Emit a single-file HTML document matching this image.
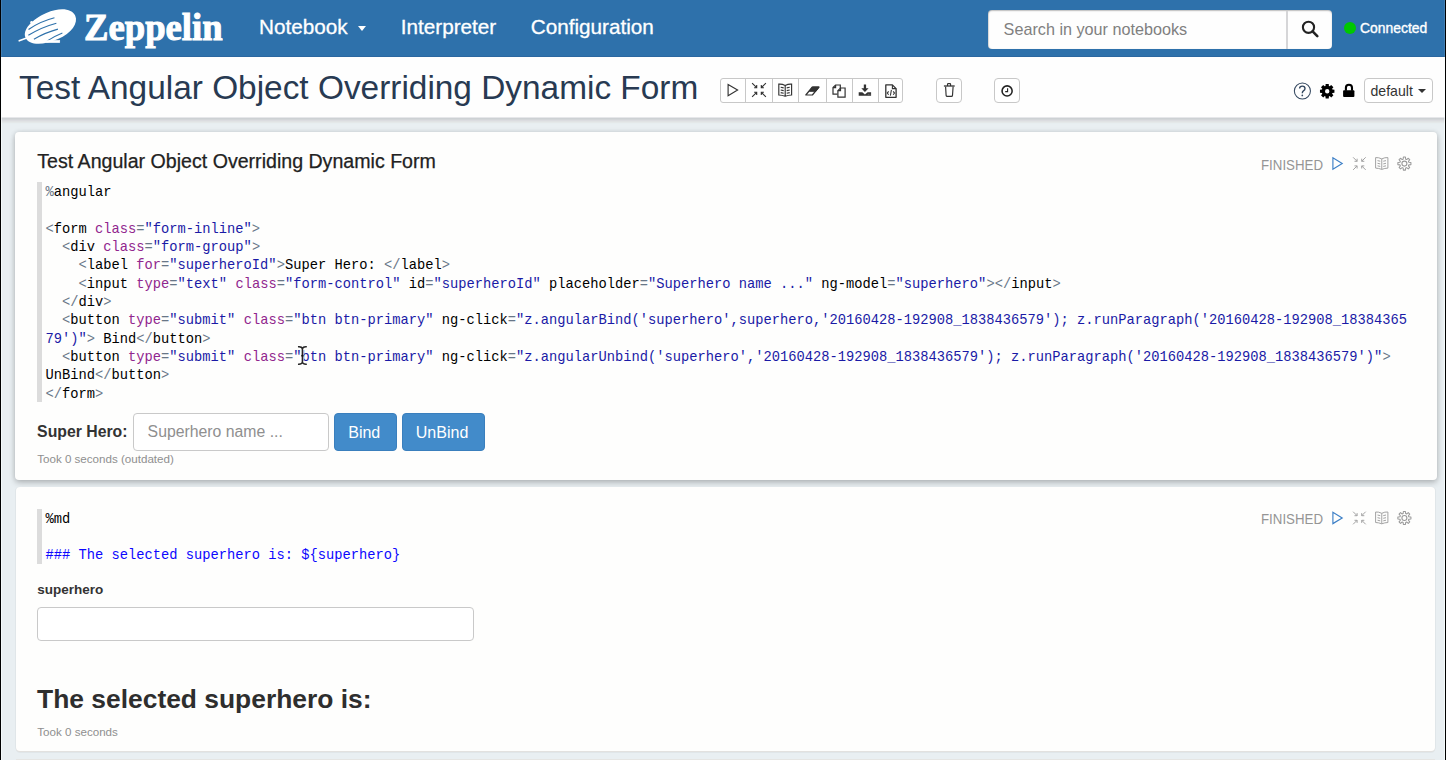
<!DOCTYPE html><html><head><meta charset="utf-8"><style>
html,body{margin:0;padding:0;}
body{width:1446px;height:760px;overflow:hidden;position:relative;background:#e9eff2;}
.t{position:absolute;white-space:pre;}
.b{position:absolute;}
</style></head><body>
<div class="b" style="left:0px;top:0px;width:1446px;height:57px;background:#2e71ab;border-bottom:1px solid #2b67a0;box-sizing:border-box;"></div>
<svg class="b" style="left:0;top:0" width="90" height="57" viewBox="0 0 90 57">
<g transform="translate(50.3,26.8) rotate(-24)">
<path d="M-27,0 C-27,-8.5 -14,-14.3 2,-14.3 C17,-14.3 27.3,-8 27.3,0 C27.3,8 17,14.3 2,14.3 C-14,14.3 -27,8.5 -27,0 Z" fill="#fff"/>
<path d="M-21,-6.4 Q-8,-9.2 7.5,-6.6" stroke="#2e71ab" stroke-width="1.15" fill="none"/>
<path d="M-23.5,-1.2 Q-8,-3.2 7,-0.8" stroke="#2e71ab" stroke-width="1.15" fill="none"/>
<path d="M-20,4.6 Q-7,3.2 6,5.2" stroke="#2e71ab" stroke-width="1.15" fill="none"/>
<path d="M-9,11.6 Q0,10.3 8.5,10.6" stroke="#2e71ab" stroke-width="1" fill="none"/>
</g>
<path d="M19.2,40.8 L26,38.2" stroke="#fff" stroke-width="1.6" stroke-linecap="round"/>
<circle cx="31.6" cy="22.3" r="1.3" fill="#fff"/>
<rect x="46.4" y="40.3" width="13.4" height="2.4" fill="#fff" stroke="#fff" stroke-width="0.5"/>
</svg>
<div class="t" style="left:84.30px;top:7.77px;font-size:38px;line-height:38px;font-family:'Liberation Serif', serif;color:#fff;font-weight:bold;-webkit-text-stroke:1px #fff;transform:scaleX(0.965);transform-origin:0 0;">Zeppelin</div>
<div class="t" style="left:259.00px;top:16.68px;font-size:20.7px;line-height:20.7px;font-family:'Liberation Sans', sans-serif;color:#fff;font-weight:normal;-webkit-text-stroke:0.3px #fff;">Notebook</div>
<div class="b" style="left:358px;top:26px;width:0;height:0;border-left:4.5px solid transparent;border-right:4.5px solid transparent;border-top:5px solid #fff"></div>
<div class="t" style="left:400.80px;top:16.68px;font-size:20.7px;line-height:20.7px;font-family:'Liberation Sans', sans-serif;color:#fff;font-weight:normal;-webkit-text-stroke:0.3px #fff;">Interpreter</div>
<div class="t" style="left:530.80px;top:16.68px;font-size:20.7px;line-height:20.7px;font-family:'Liberation Sans', sans-serif;color:#fff;font-weight:normal;-webkit-text-stroke:0.3px #fff;">Configuration</div>
<div class="b" style="left:988px;top:10px;width:344px;height:38.5px;background:#fefefe;border-radius:4px;box-shadow:inset 0 1px 1.5px rgba(0,0,0,0.25), inset 1px 0 1px rgba(0,0,0,0.12);"></div>
<div class="b" style="left:1286.2px;top:10.5px;width:1.7999999999999545px;height:38.0px;background:#d6d6d8;"></div>
<div class="t" style="left:1003.60px;top:21.09px;font-size:16.2px;line-height:16.2px;font-family:'Liberation Sans', sans-serif;color:#808080;font-weight:normal;">Search in your notebooks</div>
<svg class="b" style="left:1300px;top:19px" width="20" height="20" viewBox="0 0 20 20">
<circle cx="8.5" cy="8.3" r="5.6" stroke="#222" stroke-width="2.1" fill="none"/>
<path d="M12.6 12.4 L17.3 17.1" stroke="#222" stroke-width="2.6" stroke-linecap="round"/></svg>
<div class="b" style="left:1343.8px;top:22.1px;width:12.4px;height:12.4px;border-radius:50%;background:#00c800"></div>
<div class="t" style="left:1360.00px;top:22.03px;font-size:13.9px;line-height:13.9px;font-family:'Liberation Sans', sans-serif;color:#fff;font-weight:normal;-webkit-text-stroke:0.35px #fff;">Connected</div>
<div class="b" style="left:0px;top:57px;width:1446px;height:60px;background:#fefefe;"></div>
<div class="b" style="left:1px;top:117px;width:1444px;height:1px;background:rgb(230,231,234);"></div>
<div class="b" style="left:1px;top:118px;width:1444px;height:1px;background:rgb(205,209,212);"></div>
<div class="b" style="left:1px;top:119px;width:1444px;height:1px;background:rgb(211,214,217);"></div>
<div class="b" style="left:1px;top:120px;width:1444px;height:1px;background:rgb(219,220,224);"></div>
<div class="b" style="left:1px;top:121px;width:1444px;height:1px;background:rgb(224,227,228);"></div>
<div class="b" style="left:1px;top:122px;width:1444px;height:1px;background:rgb(228,232,233);"></div>
<div class="b" style="left:1px;top:123px;width:1444px;height:1px;background:rgb(231,238,240);"></div>
<div class="t" style="left:19.10px;top:70.73px;font-size:33.4px;line-height:33.4px;font-family:'Liberation Sans', sans-serif;color:#283a52;font-weight:normal;">Test Angular Object Overriding Dynamic Form</div>
<div class="b" style="left:15px;top:132px;width:1421.5px;height:348px;background:#fefefd;border-radius:4px;box-shadow:0 0 5px rgba(0,0,0,0.12), 0 3px 6px rgba(0,0,0,0.2);"></div>
<div class="b" style="left:16px;top:487px;width:1419px;height:264px;background:#fefefd;border-radius:4px;box-shadow:0 1px 0 #e2e1df, 0 2px 0 rgba(0,0,0,0.035), -1px 0 0 rgba(0,0,0,0.035), 1px 0 0 rgba(0,0,0,0.035);"></div>
<div class="b" style="left:16px;top:759px;width:1419px;height:1px;background:#e5e5e3;"></div>
<div class="t" style="left:37.30px;top:151.61px;font-size:19.6px;line-height:19.6px;font-family:'Liberation Sans', sans-serif;color:#222;font-weight:normal;-webkit-text-stroke:0.25px #222;">Test Angular Object Overriding Dynamic Form</div>
<div class="t" style="left:1260.80px;top:157.54px;font-size:14.6px;line-height:14.6px;font-family:'Liberation Sans', sans-serif;color:#959595;font-weight:normal;transform:scaleX(0.91);transform-origin:0 0;">FINISHED</div>
<div class="b" style="left:37px;top:182px;width:4.5px;height:220px;background:#dcdcdc;"></div>
<div class="t" style="left:45.5px;top:183.98px;font-size:13.75px;line-height:18.33px;font-family:'Liberation Mono', monospace;"><span style="color:#687687">%</span><span style="color:#000">angular</span>
 
<span style="color:#687687">&lt;</span><span style="color:#000">form</span><span style="color:#000"> </span><span style="color:#91268e">class</span><span style="color:#687687">=</span><span style="color:#1a1aa6">"form-inline"</span><span style="color:#687687">&gt;</span>
<span style="color:#000">  </span><span style="color:#687687">&lt;</span><span style="color:#000">div</span><span style="color:#000"> </span><span style="color:#91268e">class</span><span style="color:#687687">=</span><span style="color:#1a1aa6">"form-group"</span><span style="color:#687687">&gt;</span>
<span style="color:#000">    </span><span style="color:#687687">&lt;</span><span style="color:#000">label</span><span style="color:#000"> </span><span style="color:#91268e">for</span><span style="color:#687687">=</span><span style="color:#1a1aa6">"superheroId"</span><span style="color:#687687">&gt;</span><span style="color:#000">Super Hero: </span><span style="color:#687687">&lt;/</span><span style="color:#000">label</span><span style="color:#687687">&gt;</span>
<span style="color:#000">    </span><span style="color:#687687">&lt;</span><span style="color:#000">input</span><span style="color:#000"> </span><span style="color:#91268e">type</span><span style="color:#687687">=</span><span style="color:#1a1aa6">"text"</span><span style="color:#000"> </span><span style="color:#91268e">class</span><span style="color:#687687">=</span><span style="color:#1a1aa6">"form-control"</span><span style="color:#000"> id</span><span style="color:#687687">=</span><span style="color:#1a1aa6">"superheroId"</span><span style="color:#000"> placeholder</span><span style="color:#687687">=</span><span style="color:#1a1aa6">"Superhero name ..."</span><span style="color:#000"> ng-model</span><span style="color:#687687">=</span><span style="color:#1a1aa6">"superhero"</span><span style="color:#687687">&gt;&lt;/</span><span style="color:#000">input</span><span style="color:#687687">&gt;</span>
<span style="color:#000">  </span><span style="color:#687687">&lt;/</span><span style="color:#000">div</span><span style="color:#687687">&gt;</span>
<span style="color:#000">  </span><span style="color:#687687">&lt;</span><span style="color:#000">button</span><span style="color:#000"> </span><span style="color:#91268e">type</span><span style="color:#687687">=</span><span style="color:#1a1aa6">"submit"</span><span style="color:#000"> </span><span style="color:#91268e">class</span><span style="color:#687687">=</span><span style="color:#1a1aa6">"btn btn-primary"</span><span style="color:#000"> ng-click</span><span style="color:#687687">=</span><span style="color:#1a1aa6">"z.angularBind('superhero',superhero,'20160428-192908_1838436579'); z.runParagraph('20160428-192908_18384365</span>
<span style="color:#1a1aa6">79')"</span><span style="color:#687687">&gt;</span><span style="color:#000"> Bind</span><span style="color:#687687">&lt;/</span><span style="color:#000">button</span><span style="color:#687687">&gt;</span>
<span style="color:#000">  </span><span style="color:#687687">&lt;</span><span style="color:#000">button</span><span style="color:#000"> </span><span style="color:#91268e">type</span><span style="color:#687687">=</span><span style="color:#1a1aa6">"submit"</span><span style="color:#000"> </span><span style="color:#91268e">class</span><span style="color:#687687">=</span><span style="color:#1a1aa6">"btn btn-primary"</span><span style="color:#000"> ng-click</span><span style="color:#687687">=</span><span style="color:#1a1aa6">"z.angularUnbind('superhero','20160428-192908_1838436579'); z.runParagraph('20160428-192908_1838436579')"</span><span style="color:#687687">&gt;</span>
<span style="color:#000">UnBind</span><span style="color:#687687">&lt;/</span><span style="color:#000">button</span><span style="color:#687687">&gt;</span>
<span style="color:#687687">&lt;/</span><span style="color:#000">form</span><span style="color:#687687">&gt;</span></div>
<div class="t" style="left:37.10px;top:423.63px;font-size:15.8px;line-height:15.8px;font-family:'Liberation Sans', sans-serif;color:#333;font-weight:bold;">Super Hero:</div>
<div class="b" style="left:132.5px;top:413px;width:196.5px;height:38.30000000000001px;background:#fff;border:1px solid #c9c9c9;border-radius:4px;box-sizing:border-box;"></div>
<div class="t" style="left:147.60px;top:423.93px;font-size:15.8px;line-height:15.8px;font-family:'Liberation Sans', sans-serif;color:#8f8f8f;font-weight:normal;">Superhero name ...</div>
<div class="b" style="left:334.2px;top:413px;width:62.60000000000002px;height:38.30000000000001px;background:#428bca;border:1px solid #3a7fbd;border-radius:4px;box-sizing:border-box;"></div>
<div class="t" style="left:348.20px;top:424.41px;font-size:16.05px;line-height:16.05px;font-family:'Liberation Sans', sans-serif;color:#fff;font-weight:normal;">Bind</div>
<div class="b" style="left:401.7px;top:413px;width:83.30000000000001px;height:38.30000000000001px;background:#428bca;border:1px solid #3a7fbd;border-radius:4px;box-sizing:border-box;"></div>
<div class="t" style="left:415.80px;top:424.41px;font-size:16.05px;line-height:16.05px;font-family:'Liberation Sans', sans-serif;color:#fff;font-weight:normal;">UnBind</div>
<div class="t" style="left:37.20px;top:452.78px;font-size:11.6px;line-height:11.6px;font-family:'Liberation Sans', sans-serif;color:#8f8f8f;font-weight:normal;">Took 0 seconds (outdated)</div>
<div class="t" style="left:1260.80px;top:511.94px;font-size:14.6px;line-height:14.6px;font-family:'Liberation Sans', sans-serif;color:#959595;font-weight:normal;transform:scaleX(0.91);transform-origin:0 0;">FINISHED</div>
<div class="b" style="left:37px;top:509px;width:4.5px;height:55px;background:#dcdcdc;"></div>
<div class="t" style="left:45.5px;top:510.58px;font-size:13.75px;line-height:18.33px;font-family:'Liberation Mono', monospace;"><span style="color:#000">%md</span>
 
<span style="color:#0c07ff">### The selected superhero is: ${superhero}</span></div>
<div class="t" style="left:37.30px;top:582.57px;font-size:13.5px;line-height:13.5px;font-family:'Liberation Sans', sans-serif;color:#333;font-weight:bold;">superhero</div>
<div class="b" style="left:37px;top:606.8px;width:436.5px;height:33.80000000000007px;background:#fff;border:1px solid #c9c9c9;border-radius:4px;box-sizing:border-box;"></div>
<div class="t" style="left:37.10px;top:686.25px;font-size:26.4px;line-height:26.4px;font-family:'Liberation Sans', sans-serif;color:#2e2e2e;font-weight:bold;">The selected superhero is:</div>
<div class="t" style="left:37.30px;top:726.38px;font-size:11.6px;line-height:11.6px;font-family:'Liberation Sans', sans-serif;color:#8f8f8f;font-weight:normal;">Took 0 seconds</div>
<div class="b" style="left:719.5px;top:78.3px;width:183.29999999999995px;height:24.299999999999997px;border:1px solid #c8c8c8;border-radius:3px;box-sizing:border-box;background:#fff;"></div>
<div class="b" style="left:745.1px;top:78.3px;width:1.0px;height:24.299999999999997px;background:#c8c8c8;"></div>
<div class="b" style="left:771.8px;top:78.3px;width:1.0px;height:24.299999999999997px;background:#c8c8c8;"></div>
<div class="b" style="left:798.1px;top:78.3px;width:1.0px;height:24.299999999999997px;background:#c8c8c8;"></div>
<div class="b" style="left:825.9px;top:78.3px;width:1.0px;height:24.299999999999997px;background:#c8c8c8;"></div>
<div class="b" style="left:852.0px;top:78.3px;width:1.0px;height:24.299999999999997px;background:#c8c8c8;"></div>
<div class="b" style="left:877.8px;top:78.3px;width:1.0px;height:24.299999999999997px;background:#c8c8c8;"></div>
<div class="b" style="left:936.3px;top:78.3px;width:26.100000000000023px;height:24.299999999999997px;border:1px solid #c8c8c8;border-radius:4px;box-sizing:border-box;background:#fff;"></div>
<div class="b" style="left:994.4px;top:78.3px;width:25.600000000000023px;height:24.299999999999997px;border:1px solid #c8c8c8;border-radius:4px;box-sizing:border-box;background:#fff;"></div>
<div class="b" style="left:1363.5px;top:78.3px;width:69.29999999999995px;height:24.5px;border:1px solid #c8c8c8;border-radius:4px;box-sizing:border-box;background:#fff;"></div>
<div class="t" style="left:1370.50px;top:83.56px;font-size:14.1px;line-height:14.1px;font-family:'Liberation Sans', sans-serif;color:#333;font-weight:normal;">default</div>
<div class="b" style="left:1418.3px;top:88.5px;width:0;height:0;border-left:4px solid transparent;border-right:4px solid transparent;border-top:4.6px solid #333"></div>
<svg class="b" style="left:0;top:0;z-index:50" width="1446" height="760" viewBox="0 0 1446 760"><path d="M728.1,84.5 L728.1,95.8 L737.6,90.1 Z" stroke="#333" stroke-width="1.15" fill="none" stroke-linejoin="miter"/><path d="M752.10,83.10 L756.70,87.70 M756.70,85.10 L756.70,87.70 L754.10,87.70 M752.10,96.90 L756.70,92.30 M756.70,94.90 L756.70,92.30 L754.10,92.30 M765.90,83.10 L761.30,87.70 M761.30,85.10 L761.30,87.70 L763.90,87.70 M765.90,96.90 L761.30,92.30 M761.30,94.90 L761.30,92.30 L763.90,92.30 " stroke="#333" stroke-width="1.1" fill="none" stroke-linecap="butt"/><path d="M785.2,85.39999999999999 Q782.0,83.8 778.8,84.1 L778.8,95.0 Q782.0,95.1 785.2,96.3 M785.2,85.39999999999999 Q788.4000000000001,83.8 791.6,84.1 L791.6,95.0 Q788.4000000000001,95.1 785.2,96.3 M785.2,85.39999999999999 L785.2,96.3 M780.6999999999999,87.25 L783.7,87.85 M789.7,87.25 L786.7,87.85 M780.6999999999999,90.0 L783.7,90.6 M789.7,90.0 L786.7,90.6 M780.6999999999999,92.625 L783.7,93.225 M789.7,92.625 L786.7,93.225 " stroke="#333" stroke-width="1.15" fill="none"/><path d="M805.8,95.0 L812.4,95.0 L819.0,87.0 L812.4,87.0 Z" stroke="#333" stroke-width="1.2" fill="none" stroke-linejoin="round"/><path d="M809.3,91.3 L815.9,91.3 L819.0,87.0 L812.4,87.0 Z" fill="#333" stroke="#333" stroke-width="1"/><path d="M837.6,94.2 L833.0,94.2 L833.0,87.6 L835.6,85.0 L840.3,85.0 L840.3,87.9" stroke="#333" stroke-width="1.2" fill="none"/><path d="M833.0,87.6 L835.6,87.6 L835.6,85.0" stroke="#333" stroke-width="1.2" fill="none"/><path d="M837.9,90.6 L840.5,88.0 L845.1,88.0 L845.1,97.1 L837.9,97.1 Z" stroke="#333" stroke-width="1.2" fill="#fff"/><path d="M837.9,90.6 L840.5,90.6 L840.5,88.0" stroke="#333" stroke-width="1.2" fill="none"/><path d="M863.8,84.6 L866.1,84.6 L866.1,88.3 L868.6,88.3 L864.95,91.9 L861.3,88.3 L863.8,88.3 Z" fill="#333"/><path d="M858.7,92.2 L862.3,92.2 L864.95,94.6 L867.6,92.2 L871.1,92.2 L871.1,95.8 L858.7,95.8 Z" fill="#333"/><path d="M867.8,94.3 L868.8,94.3 M869.6,94.3 L870.4,94.3" stroke="#999" stroke-width="0.7"/><path d="M885.8,84.9 L892.4,84.9 L896.1,88.6 L896.1,97.3 L885.8,97.3 Z" stroke="#333" stroke-width="1.3" fill="none" stroke-linejoin="round"/><path d="M892.4,84.9 L892.4,88.6 L896.1,88.6" stroke="#333" stroke-width="1.1" fill="none"/><path d="M888.6,91.4 L887.3,93.1 L888.6,94.8 M891.4,89.8 L890.4,95.6 M893.2,91.4 L894.5,93.1 L893.2,94.8" stroke="#333" stroke-width="1.05" fill="none"/><path d="M943.9,86.0 L954.7,86.0" stroke="#333" stroke-width="1.3"/><path d="M947.5,86 L947.5,84.3 Q947.5,83.6 948.2,83.6 L949.9,83.6 Q950.6,83.6 950.6,84.3 L950.6,86" stroke="#333" stroke-width="1.1" fill="none"/><path d="M945.6,86.6 L946.1,95.4 Q946.2,96.4 947.2,96.4 L951.4,96.4 Q952.4,96.4 952.5,95.4 L953.1,86.6" stroke="#333" stroke-width="1.15" fill="none"/><circle cx="1007.1" cy="90.9" r="5.05" stroke="#222" stroke-width="1.55" fill="none"/><path d="M1007.6,88.2 L1007.6,91.6 L1005.2,91.6" stroke="#222" stroke-width="1.1" fill="none"/><circle cx="1302.4" cy="91" r="8.05" stroke="#33475f" stroke-width="1.05" fill="none"/><path d="M1299.6,88.6 Q1299.6,86.1 1302.3,86.1 Q1305,86.1 1305,88.5 Q1305,89.9 1303.4,90.9 Q1302.3,91.6 1302.3,93.2" stroke="#33475f" stroke-width="1.4" fill="none"/><circle cx="1302.3" cy="95.4" r="0.85" fill="#33475f"/><path d="M1325.50,85.97 L1325.64,83.97 L1328.76,83.97 L1328.90,85.97 L1329.70,86.30 L1331.21,84.98 L1333.42,87.19 L1332.10,88.70 L1332.43,89.50 L1334.43,89.64 L1334.43,92.76 L1332.43,92.90 L1332.10,93.70 L1333.42,95.21 L1331.21,97.42 L1329.70,96.10 L1328.90,96.43 L1328.76,98.43 L1325.64,98.43 L1325.50,96.43 L1324.70,96.10 L1323.19,97.42 L1320.98,95.21 L1322.30,93.70 L1321.97,92.90 L1319.97,92.76 L1319.97,89.64 L1321.97,89.50 L1322.30,88.70 L1320.98,87.19 L1323.19,84.98 L1324.70,86.30 Z M1325.00,91.20 a2.2,2.2 0 1,0 4.4,0 a2.2,2.2 0 1,0 -4.4,0 Z" fill="#000" fill-rule="evenodd"/><path d="M1345.9,90.8 L1345.9,87.8 A3.05,3.05 0 0 1 1352,87.8 L1352,90.8" stroke="#000" stroke-width="2.1" fill="none"/><rect x="1343.1" y="90.3" width="11.3" height="6.7" rx="0.9" fill="#000"/><path d="M1332.9,157.8 L1332.9,169.2 L1342.2,163.5 Z" stroke="#3c7fc6" stroke-width="1.15" fill="none"/><path d="M1353.10,157.30 L1357.10,161.30 M1357.10,158.70 L1357.10,161.30 L1354.50,161.30 M1353.10,169.90 L1357.10,165.90 M1357.10,168.50 L1357.10,165.90 L1354.50,165.90 M1365.70,157.30 L1361.70,161.30 M1361.70,158.70 L1361.70,161.30 L1364.30,161.30 M1365.70,169.90 L1361.70,165.90 M1361.70,168.50 L1361.70,165.90 L1364.30,165.90 " stroke="#a3a3a3" stroke-width="1.0" fill="none" stroke-linecap="butt"/><path d="M1381.75,158.9 Q1378.675,157.3 1375.6,157.60000000000002 L1375.6,168.1 Q1378.675,168.20000000000002 1381.75,169.4 M1381.75,158.9 Q1384.825,157.3 1387.9,157.60000000000002 L1387.9,168.1 Q1384.825,168.20000000000002 1381.75,169.4 M1381.75,158.9 L1381.75,169.4 M1377.5,160.63 L1380.25,161.23000000000002 M1386.0,160.63 L1383.25,161.23000000000002 M1377.5,163.292 L1380.25,163.89200000000002 M1386.0,163.292 L1383.25,163.89200000000002 M1377.5,165.833 L1380.25,166.43300000000002 M1386.0,165.833 L1383.25,166.43300000000002 " stroke="#a3a3a3" stroke-width="1.0" fill="none"/><path d="M1403.12,159.18 L1403.37,157.08 L1405.43,157.08 L1405.68,159.18 L1406.62,159.57 L1408.28,158.26 L1409.74,159.72 L1408.43,161.38 L1408.82,162.32 L1410.92,162.57 L1410.92,164.63 L1408.82,164.88 L1408.43,165.82 L1409.74,167.48 L1408.28,168.94 L1406.62,167.63 L1405.68,168.02 L1405.43,170.12 L1403.37,170.12 L1403.12,168.02 L1402.18,167.63 L1400.52,168.94 L1399.06,167.48 L1400.37,165.82 L1399.98,164.88 L1397.88,164.63 L1397.88,162.57 L1399.98,162.32 L1400.37,161.38 L1399.06,159.72 L1400.52,158.26 L1402.18,159.57 Z" stroke="#9a9a9a" stroke-width="1.05" fill="none" stroke-linejoin="round"/><circle cx="1404.4" cy="163.6" r="2.5" stroke="#9a9a9a" stroke-width="1.1" fill="none"/><path d="M1332.9,512.2 L1332.9,523.5999999999999 L1342.2,517.9 Z" stroke="#3c7fc6" stroke-width="1.15" fill="none"/><path d="M1353.10,511.70 L1357.10,515.70 M1357.10,513.10 L1357.10,515.70 L1354.50,515.70 M1353.10,524.30 L1357.10,520.30 M1357.10,522.90 L1357.10,520.30 L1354.50,520.30 M1365.70,511.70 L1361.70,515.70 M1361.70,513.10 L1361.70,515.70 L1364.30,515.70 M1365.70,524.30 L1361.70,520.30 M1361.70,522.90 L1361.70,520.30 L1364.30,520.30 " stroke="#a3a3a3" stroke-width="1.0" fill="none" stroke-linecap="butt"/><path d="M1381.75,513.3 Q1378.675,511.7 1375.6,512.0 L1375.6,522.5 Q1378.675,522.5999999999999 1381.75,523.8 M1381.75,513.3 Q1384.825,511.7 1387.9,512.0 L1387.9,522.5 Q1384.825,522.5999999999999 1381.75,523.8 M1381.75,513.3 L1381.75,523.8 M1377.5,515.03 L1380.25,515.6299999999999 M1386.0,515.03 L1383.25,515.6299999999999 M1377.5,517.692 L1380.25,518.2919999999999 M1386.0,517.692 L1383.25,518.2919999999999 M1377.5,520.2330000000001 L1380.25,520.833 M1386.0,520.2330000000001 L1383.25,520.833 " stroke="#a3a3a3" stroke-width="1.0" fill="none"/><path d="M1403.12,513.58 L1403.37,511.48 L1405.43,511.48 L1405.68,513.58 L1406.62,513.97 L1408.28,512.66 L1409.74,514.12 L1408.43,515.78 L1408.82,516.72 L1410.92,516.97 L1410.92,519.03 L1408.82,519.28 L1408.43,520.22 L1409.74,521.88 L1408.28,523.34 L1406.62,522.03 L1405.68,522.42 L1405.43,524.52 L1403.37,524.52 L1403.12,522.42 L1402.18,522.03 L1400.52,523.34 L1399.06,521.88 L1400.37,520.22 L1399.98,519.28 L1397.88,519.03 L1397.88,516.97 L1399.98,516.72 L1400.37,515.78 L1399.06,514.12 L1400.52,512.66 L1402.18,513.97 Z" stroke="#9a9a9a" stroke-width="1.05" fill="none" stroke-linejoin="round"/><circle cx="1404.4" cy="518.0" r="2.5" stroke="#9a9a9a" stroke-width="1.1" fill="none"/><path d="M298.0,346.8 Q302.4,346.3 302.4,349.6 L302.4,361.4 Q302.4,364.6 298.0,364.2 M306.8,346.8 Q302.4,346.3 302.4,349.6 M302.4,361.4 Q302.4,364.6 306.8,364.2" stroke="#fff" stroke-width="3" fill="none" opacity="0.75"/><path d="M298.0,346.8 Q302.4,346.3 302.4,349.6 L302.4,361.4 Q302.4,364.6 298.0,364.2 M306.8,346.8 Q302.4,346.3 302.4,349.6 M302.4,361.4 Q302.4,364.6 306.8,364.2" stroke="#262626" stroke-width="1.5" fill="none"/><rect x="301.3" y="354.9" width="2.2" height="1.6" fill="#111"/></svg><div class="b" style="left:1px;top:57px;width:1px;height:703px;background:rgba(250,255,255,0.65);z-index:99"></div>
<div class="b" style="left:1444px;top:57px;width:1px;height:703px;background:rgba(250,255,255,0.65);z-index:99"></div>
<div class="b" style="left:1px;top:0;width:1px;height:57px;background:rgba(255,255,255,0.1);z-index:99"></div>
<div class="b" style="left:1444px;top:0;width:1px;height:57px;background:rgba(255,255,255,0.1);z-index:99"></div>
<div class="b" style="left:0;top:0;width:1px;height:760px;background:#000;z-index:99"></div>
<div class="b" style="left:1445px;top:0;width:1px;height:760px;background:#000;z-index:99"></div>
</body></html>
